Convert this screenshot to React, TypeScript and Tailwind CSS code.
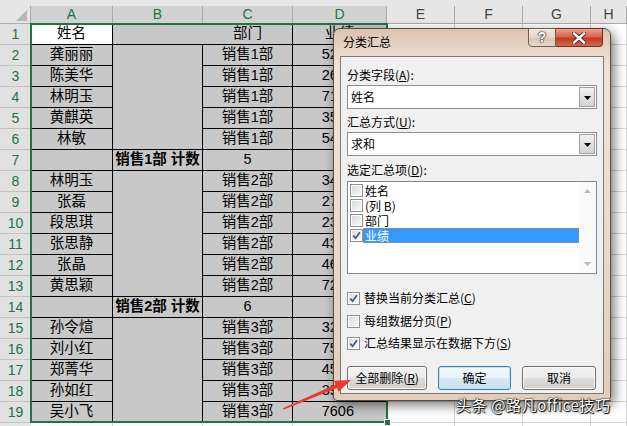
import React from "react";

type BCell = { text?: string; span?: number; noRight?: boolean };
type Row = { n: number; a: string; b?: BCell; c: string; d: string; head?: boolean; sub?: boolean };

const rows: Row[] = [
  { n: 1, a: "姓名", b: { noRight: true }, c: "部门", d: "业绩", head: true },
  { n: 2, a: "龚丽丽", b: { span: 5 }, c: "销售1部", d: "5286" },
  { n: 3, a: "陈美华", c: "销售1部", d: "2645" },
  { n: 4, a: "林明玉", c: "销售1部", d: "7120" },
  { n: 5, a: "黄麒英", c: "销售1部", d: "3520" },
  { n: 6, a: "林敏", c: "销售1部", d: "5473" },
  { n: 7, a: "", b: { text: "销售1部 计数" }, c: "5", d: "", sub: true },
  { n: 8, a: "林明玉", b: { span: 6 }, c: "销售2部", d: "3456" },
  { n: 9, a: "张磊", c: "销售2部", d: "2798" },
  { n: 10, a: "段思琪", c: "销售2部", d: "2309" },
  { n: 11, a: "张思静", c: "销售2部", d: "4380" },
  { n: 12, a: "张晶", c: "销售2部", d: "4672" },
  { n: 13, a: "黄思颖", c: "销售2部", d: "7233" },
  { n: 14, a: "", b: { text: "销售2部 计数" }, c: "6", d: "", sub: true },
  { n: 15, a: "孙令煊", b: { span: 5 }, c: "销售3部", d: "3208" },
  { n: 16, a: "刘小红", c: "销售3部", d: "7545" },
  { n: 17, a: "郑菁华", c: "销售3部", d: "4590" },
  { n: 18, a: "孙如红", c: "销售3部", d: "3977" },
  { n: 19, a: "吴小飞", c: "销售3部", d: "7606" },
];

const spanClass: Record<number, string> = { 5: "row-span-5", 6: "row-span-6" };

const colLetters = ["A", "B", "C", "D", "E", "F", "G", "H"];

const base = "flex items-center border-r border-b border-black bg-[#c8c8c8] text-black";
const cell = `${base} justify-center`;
const blank = "border-r border-b border-[#d4d4d4] bg-white";

function Check({ checked }: { checked?: boolean }) {
  return (
    <span className="relative flex h-[13px] w-[13px] shrink-0 items-center justify-center border border-[#8e8f8f] bg-white">
      <span className="absolute inset-[1px] bg-[linear-gradient(135deg,#dcdcdc,#f7f7f7)]" />
      {checked && (
        <svg width="9" height="9" viewBox="0 0 9 9" className="relative">
          <path d="M1.3 4.6 L3.6 7.2 L7.9 1.2" fill="none" stroke="#3f5393" strokeWidth="1.7" />
        </svg>
      )}
    </span>
  );
}

function Select({ value }: { value: string }) {
  return (
    <div className="flex h-[24px] items-stretch border border-[#8e8f8f] bg-white">
      <span className="flex flex-1 items-center pl-[3px] text-[12px]">{value}</span>
      <span className="m-[1px] flex w-[16px] items-center justify-center border border-[#a0a0a0] bg-[linear-gradient(180deg,#f2f2f2,#e2e2e2_50%,#d2d2d2)]">
        <svg width="7" height="4" viewBox="0 0 7 4" className="mt-[2px]">
          <path d="M0 0 H7 L3.5 4 Z" fill="#000" />
        </svg>
      </span>
    </div>
  );
}

function Btn({ children, w, primary }: { children: React.ReactNode; w: string; primary?: boolean }) {
  return (
    <div
      className={`flex h-[24px] ${w} items-center justify-center rounded-[3px] border text-[12px] ${
        primary
          ? "border-[#3c7fb1] bg-[linear-gradient(180deg,#f4f9fc,#e9f3f9_50%,#d6e8f3_51%,#c9e0ee)] shadow-[inset_0_0_0_1px_#bde5f8]"
          : "border-[#707070] bg-[linear-gradient(180deg,#f2f2f2,#ebebeb_50%,#dddddd_51%,#cfcfcf)] shadow-[inset_0_0_0_1px_#fbfbfb]"
      }`}
    >
      {children}
    </div>
  );
}

export default function App() {
  return (
    <div className="relative h-[426px] w-[627px] overflow-hidden bg-white font-['Liberation_Sans','Noto_Sans_CJK_SC',sans-serif]">
      <div className="h-[6px] bg-[#e6e6e6]" />
      <div className="grid h-[420px] grid-cols-[31px_82px_90px_90px_94px_68px_68px_68px_1fr] grid-rows-[18px_repeat(20,21px)] overflow-hidden text-[14.5px]">
        {/* corner */}
        <div className="relative border-r border-b border-[#ababab] bg-[#e6e6e6]">
          <svg width="11" height="11" className="absolute right-[3px] bottom-[2px]">
            <path d="M11 0 V11 H0 Z" fill="#b7b7b7" />
          </svg>
        </div>
        {colLetters.map((l, i) => (
          <div
            key={l}
            className={`flex items-center justify-center border-r border-b border-[#ababab] text-[14px] ${
              i < 4 ? "bg-[#d2d2d2] text-[#217346]" : "bg-[#e6e6e6] text-[#444]"
            }`}
          >
            {l}
          </div>
        ))}

        {rows.map((r) => (
          <React.Fragment key={r.n}>
            <div className="flex items-center justify-center border-b border-[#c3c3c3] bg-[#e1e1e1] text-[14px] text-[#217346]">
              {r.n}
            </div>
            <div className={`${cell} ${r.head ? "bg-white" : ""}`}>{r.a}</div>
            {r.b && (
              <div
                className={`${cell} whitespace-nowrap ${r.b.span ? spanClass[r.b.span] : ""} ${
                  r.b.noRight ? "border-r-0" : ""
                } ${r.sub ? "font-bold" : ""}`}
              >
                {r.b.text}
              </div>
            )}
            <div className={cell}>{r.c}</div>
            <div className={r.head ? cell : `${base} justify-end pr-[32px]`}>{r.d}</div>
            <div className={blank} />
            <div className={blank} />
            <div className={blank} />
            <div className={blank} />
          </React.Fragment>
        ))}
        <div className="border-b border-[#c3c3c3] bg-[#e6e6e6]" />
        <div className={blank} />
        <div className={blank} />
        <div className={blank} />
        <div className={blank} />
        <div className={blank} />
        <div className={blank} />
        <div className={blank} />
        <div className={blank} />
      </div>

      {/* selection border */}
      <div className="absolute left-[30px] top-[23px] h-[400px] w-[358px] border-2 border-[#217346]" />
      <div className="absolute left-[384px] top-[419px] h-[7px] w-[7px] border border-white bg-[#217346]" />

      {/* dialog */}
      <div className="absolute left-[333px] top-[28px] h-[373px] w-[278px] rounded-t-[7px] rounded-b-[4px] border border-[#5b4c42] bg-[linear-gradient(180deg,#dcc4af_0%,#efe3d8_10%,#eadbcd_55%,#e2cdba_100%)] font-['Noto_Sans_CJK_SC',sans-serif] text-[12px] text-black shadow-[3px_4px_12px_rgba(0,0,0,0.55)]">
        <div className="flex h-[27px] justify-between">
          <span className="pl-[9px] pt-[5px] leading-[16px]">分类汇总</span>
          <div className="mr-[7px] flex h-[19px] -mt-px">
            <div className="flex w-[28px] items-center justify-center rounded-bl-[4px] border border-[#6e5f54] bg-[linear-gradient(180deg,#f2e9e1,#e5d6c9_50%,#d8c5b5_51%,#e6d7ca)] font-['Liberation_Sans',sans-serif] text-[14px] font-bold text-white [text-shadow:0_0_1px_#222,0_0_1px_#222,0_0_2px_#222]">
              ?
            </div>
            <div className="flex w-[47px] items-center justify-center rounded-br-[4px] border border-l-0 border-[#6e2f24] bg-[linear-gradient(180deg,#e9a493,#d8634b_45%,#c23a1f_55%,#d46a4e)]">
              <svg width="14" height="12" viewBox="0 0 14 12">
                <path d="M2 1.5 L12 10.5 M12 1.5 L2 10.5" stroke="#3b2a25" strokeWidth="4.2" strokeLinecap="square" />
                <path d="M2 1.5 L12 10.5 M12 1.5 L2 10.5" stroke="#ffffff" strokeWidth="2.4" strokeLinecap="square" />
              </svg>
            </div>
          </div>
        </div>

        <div className="mx-[6px] flex h-[338px] flex-col border border-[#7a7a7a] bg-[#f0f0f0] px-[6px] pt-[10px] leading-[16px]">
          <span>
            分类字段(<u>A</u>):
          </span>
          <div className="mt-[2px]">
            <Select value="姓名" />
          </div>
          <span className="mt-[5px]">
            汇总方式(<u>U</u>):
          </span>
          <div className="mt-[2px]">
            <Select value="求和" />
          </div>
          <span className="mt-[6px]">
            选定汇总项(<u>D</u>):
          </span>
          <div className="mt-[3px] flex h-[93px] border border-[#828790] bg-white">
            <div className="flex flex-1 flex-col pl-[2px] pt-[1px]">
              {["姓名", "(列 B)", "部门"].map((t) => (
                <div key={t} className="flex h-[15px] items-center">
                  <Check />
                  <span className="pl-[2px]">{t}</span>
                </div>
              ))}
              <div className="flex h-[15px] items-center">
                <span className="outline-1 outline-dotted outline-[#333] -outline-offset-1">
                  <Check checked />
                </span>
                <span className="flex h-[15px] flex-1 items-center border border-dotted border-[#c9822f] bg-[#3399ff] pl-[1px] text-white">
                  业绩
                </span>
              </div>
            </div>
            <div className="flex w-[17px] flex-col items-center justify-between bg-[#fafafa] py-[7px]">
              <svg width="7" height="4" viewBox="0 0 7 4">
                <path d="M0 4 H7 L3.5 0 Z" fill="#b9b9b9" />
              </svg>
              <svg width="7" height="4" viewBox="0 0 7 4">
                <path d="M0 0 H7 L3.5 4 Z" fill="#b9b9b9" />
              </svg>
            </div>
          </div>

          <div className="mt-[16px] flex h-[16px] items-center gap-[4px]">
            <Check checked />
            <span>
              替换当前分类汇总(<u>C</u>)
            </span>
          </div>
          <div className="mt-[7px] flex h-[16px] items-center gap-[4px]">
            <Check />
            <span>
              每组数据分页(<u>P</u>)
            </span>
          </div>
          <div className="mt-[6px] flex h-[16px] items-center gap-[4px]">
            <Check checked />
            <span>
              汇总结果显示在数据下方(<u>S</u>)
            </span>
          </div>

          <div className="mt-[15px] flex gap-[11px]">
            <Btn w="w-[80px]">
              全部删除(<u>R</u>)
            </Btn>
            <Btn w="w-[73px]" primary>
              确定
            </Btn>
            <Btn w="w-[74px]">取消</Btn>
          </div>
        </div>
      </div>

      {/* red arrow */}
      <svg className="pointer-events-none absolute inset-0" width="627" height="426">
        <polygon
          points="282.7,408.3 335.5,384.4 334,380.7 351,380 338.6,391.7 337.1,388 283.3,409.7"
          fill="#ec3a2e"
        />
      </svg>

      {/* watermark */}
      <div className="absolute left-[456px] top-[395px] whitespace-nowrap font-['Noto_Sans_CJK_SC',sans-serif] text-[15px] leading-[20px] tracking-[0.6px] text-white [text-shadow:0_0_1px_#000,0_0_2px_#000,1px_1px_1px_#000]">
        头条 @路凡office技巧
      </div>
    </div>
  );
}
